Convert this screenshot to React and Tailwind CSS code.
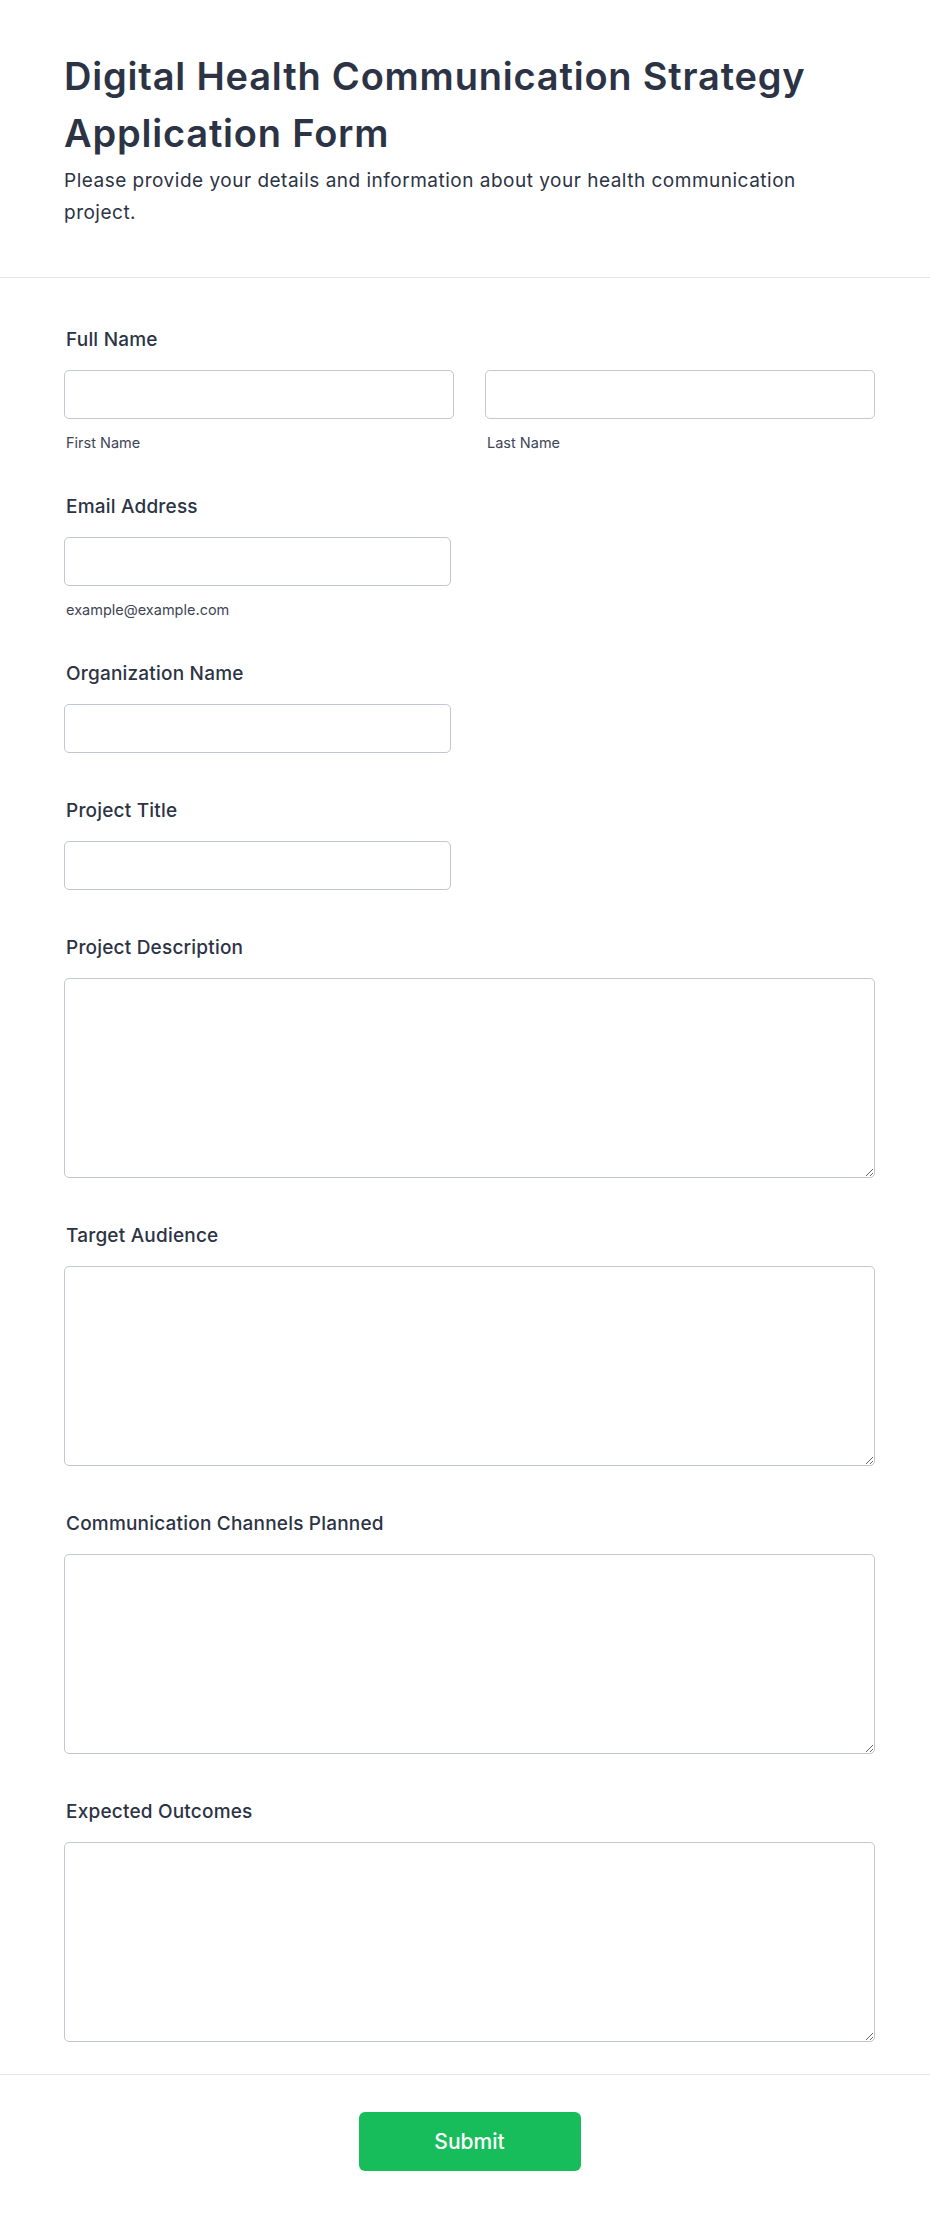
import React, { useState } from 'react';

const Label = ({ children, htmlFor }) => (
  <label htmlFor={htmlFor} className="block pl-[2px] text-[19px] leading-[28px] font-medium tracking-[0.2px] text-[#2c3345] mb-[16px]">
    {children}
  </label>
);

const SubLabel = ({ children }) => (
  <span className="block pl-[2px] mt-[18px] text-[14.5px] leading-[12px] text-[#3e4557]">{children}</span>
);

const inputCls = "block w-full h-[49px] px-3 bg-white border border-[#c3c6d4] rounded-[5px] outline-none text-[17px] text-[#2c3345] focus:border-[#4d6df5]";
const areaCls = "block w-full h-[200px] px-3 py-2 bg-white border border-[#c3c6d4] rounded-[5px] outline-none text-[17px] text-[#2c3345] focus:border-[#4d6df5]";

const App = () => {
  const [values, setValues] = useState({});
  const set = (key) => (e) => setValues({ ...values, [key]: e.target.value });

  const textFields = [
    { id: 'org', label: 'Organization Name' },
    { id: 'title', label: 'Project Title' },
  ];
  const areas = [
    { id: 'desc', label: 'Project Description' },
    { id: 'audience', label: 'Target Audience' },
    { id: 'channels', label: 'Communication Channels Planned' },
    { id: 'outcomes', label: 'Expected Outcomes' },
  ];

  return (
    <div className="min-h-screen bg-white text-[#2c3345] font-['Inter','Noto_Sans',sans-serif]">
      <header className="pt-[48px] pb-[48px] pl-[64px] pr-[55px] border-b border-[#e2e5eb]">
        <div className="max-w-[780px]">
          <h1 className="text-[38px] leading-[57px] font-semibold tracking-[0.8px]">
            Digital Health Communication Strategy Application Form
          </h1>
          <p className="mt-[3px] text-[19px] leading-[32px] tracking-[0.5px]">
            Please provide your details and information about your health communication project.
          </p>
        </div>
      </header>

      <form onSubmit={(e) => e.preventDefault()}>
        <div className="pt-[48px] pb-[32px] pl-[64px] pr-[55px] flex flex-col gap-[44px]">
          <div>
            <Label htmlFor="first">Full Name</Label>
            <div className="grid grid-cols-2 gap-[31px]">
              <div>
                <input id="first" type="text" value={values.first || ''} onChange={set('first')} className={inputCls} />
                <SubLabel>First Name</SubLabel>
              </div>
              <div>
                <input id="last" type="text" value={values.last || ''} onChange={set('last')} className={inputCls} />
                <SubLabel>Last Name</SubLabel>
              </div>
            </div>
          </div>

          <div>
            <Label htmlFor="email">Email Address</Label>
            <div className="w-[387px]">
              <input id="email" type="email" value={values.email || ''} onChange={set('email')} className={inputCls} />
              <SubLabel>example@example.com</SubLabel>
            </div>
          </div>

          {textFields.map((f) => (
            <div key={f.id}>
              <Label htmlFor={f.id}>{f.label}</Label>
              <div className="w-[387px]">
                <input id={f.id} type="text" value={values[f.id] || ''} onChange={set(f.id)} className={inputCls} />
              </div>
            </div>
          ))}

          {areas.map((f) => (
            <div key={f.id}>
              <Label htmlFor={f.id}>{f.label}</Label>
              <textarea id={f.id} value={values[f.id] || ''} onChange={set(f.id)} className={areaCls} />
            </div>
          ))}
        </div>

        <div className="border-t border-[#e6e6f0] pt-[37px] pb-[50px] pl-[64px] pr-[55px] flex justify-center">
          <button
            type="submit"
            className="w-[222px] h-[59px] rounded-[6px] bg-[#18bd5b] hover:bg-[#16aa52] text-white text-[21px] font-medium"
          >
            Submit
          </button>
        </div>
      </form>
    </div>
  );
};

export default App;
